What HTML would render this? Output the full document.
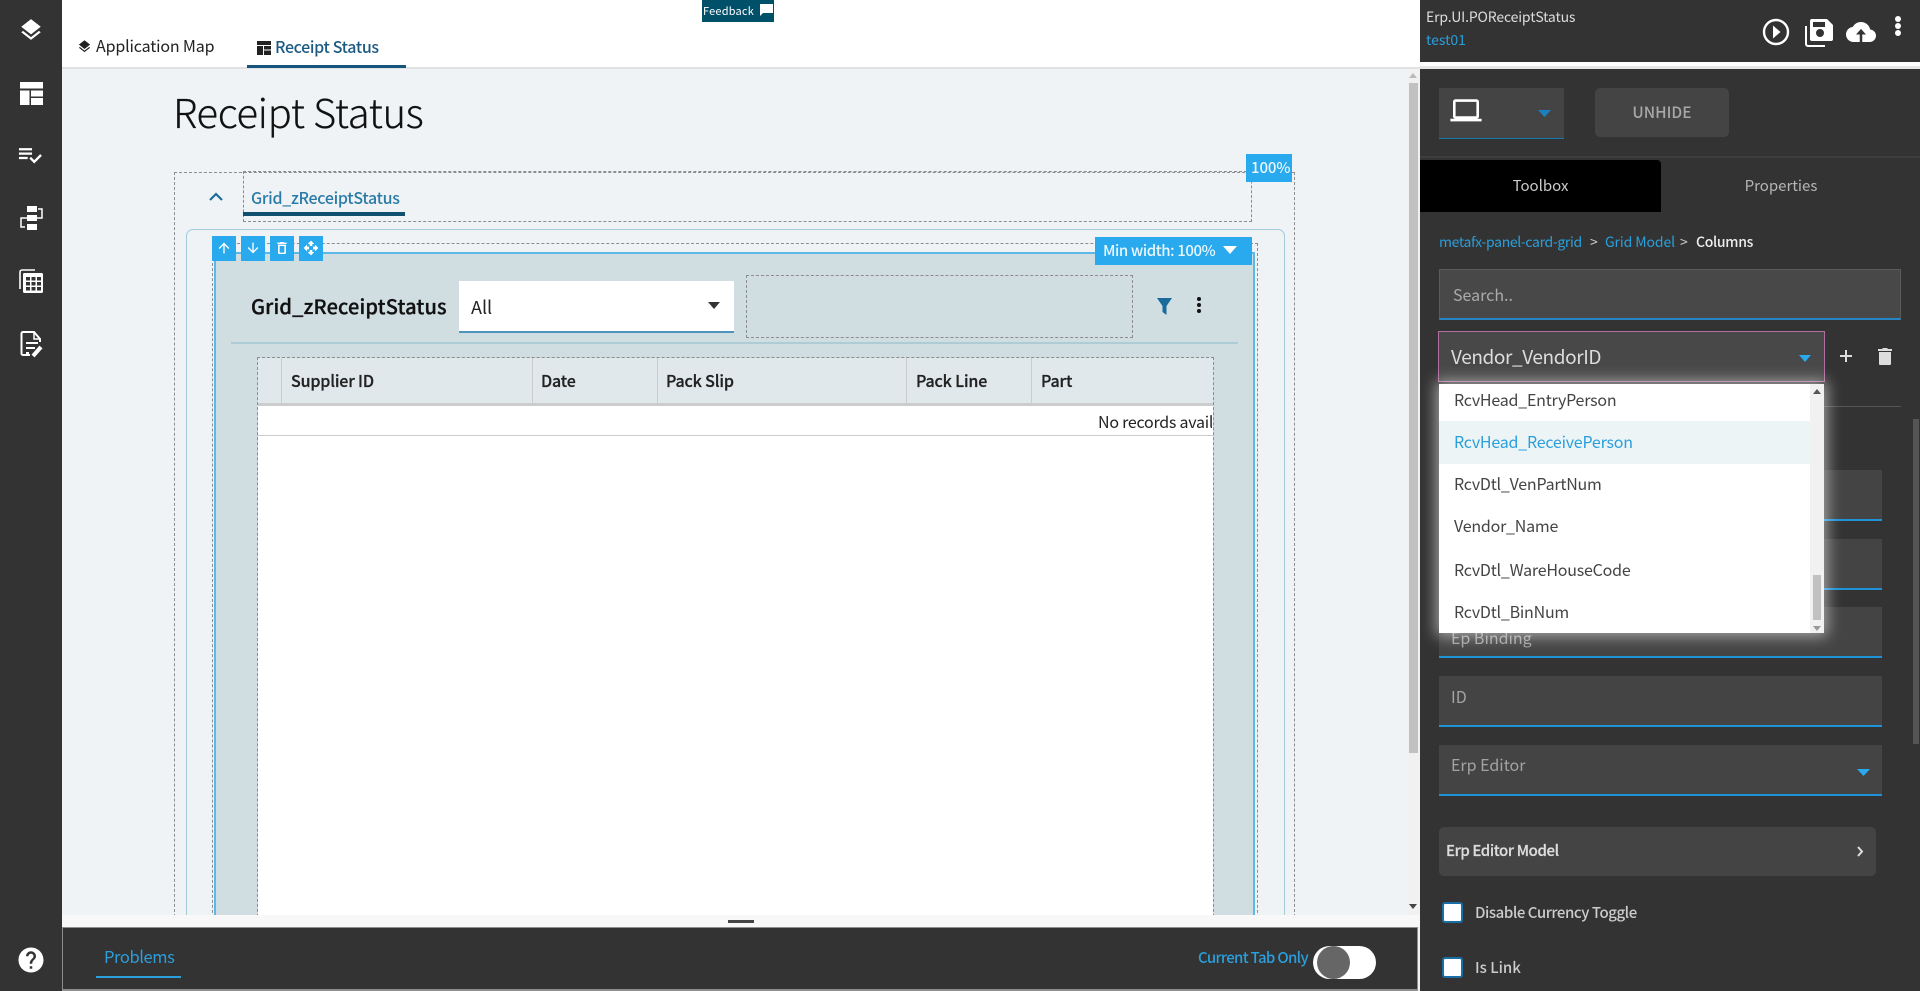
<!DOCTYPE html>
<html><head><meta charset="utf-8"><title>Receipt Status</title>
<style>
html,body{margin:0;padding:0;width:1920px;height:991px;overflow:hidden;background:#eff3f6}
body{position:relative;font-family:"Noto Sans CJK JP","Liberation Sans",sans-serif;color:#222;filter:blur(.3px)}
div,svg,span.a{position:absolute;box-sizing:border-box}
.t{position:absolute;white-space:nowrap;line-height:24px;height:24px}
.d{border:1px dashed #8d8d8d}
.f{left:1439px;width:443px;height:51px;background:#444;border-bottom:2px solid #1f93d8}
.l{left:1451px;color:#a3a3a3;font-size:16px}
.i{left:1454px;font-size:16px;color:#444;letter-spacing:-.22px}
.h{font-size:16px;font-weight:500;color:#222;letter-spacing:-.15px;-webkit-text-stroke:.25px #222}
.b{top:236px;width:24px;height:25px;background:#29aaee}
.b svg{left:4px;top:4px;width:16px;height:16px;fill:#fff}
.cb{left:1442px;width:21px;height:21px;background:#fff;border:2px solid #1a6ea8;border-radius:3px}
</style></head><body>

<!-- top white tabs -->
<div style="left:62px;top:0;width:1358px;height:67px;background:#fff"></div>
<div style="left:62px;top:67px;width:1358px;height:2px;background:#dfe1e2"></div>
<svg style="left:77px;top:39px;width:15px;height:15px" viewBox="0 0 24 24" fill="#222"><path d="M11.99 18.54l-7.37-5.73L3 14.07l9 7 9-7-1.63-1.27-7.38 5.74zM12 16l7.36-5.73L21 9l-9-7-9 7 1.63 1.27L12 16z"/></svg>
<div class="t" style="left:96px;top:33px;font-size:16px;color:#222;letter-spacing:-.15px">Application Map</div>
<svg style="left:257px;top:41px;width:14px;height:14px" viewBox="0 0 14 14" fill="#222"><rect width="14" height="4"/><rect y="5" width="6" height="9"/><rect x="7" y="5" width="7" height="3.5"/><rect x="7" y="9.5" width="7" height="4.5"/></svg>
<div class="t" style="left:275px;top:34px;font-size:16px;font-weight:500;color:#1d5a82;letter-spacing:-.35px">Receipt Status</div>
<div style="left:247px;top:65px;width:159px;height:3px;background:#17557c"></div>

<!-- feedback -->
<div style="left:702px;top:0;width:72px;height:22px;background:#00506a"></div>
<div class="t" style="left:703px;top:-1px;font-size:11px;color:#fff;letter-spacing:.2px">Feedback</div>
<svg style="left:759px;top:3px;width:15px;height:14px" viewBox="0 0 15 14" fill="#fff"><path d="M1 1h13v9H4l-3 3z"/></svg>

<!-- title -->
<div class="t" style="left:173px;top:86px;height:50px;line-height:50px;font-size:40px;font-weight:300;color:#111;letter-spacing:-.35px;-webkit-text-stroke:.2px #111">Receipt Status</div>

<!-- outer dashed -->
<div class="d" style="left:174px;top:172px;width:1121px;height:760px"></div>
<div class="d" style="left:243px;top:171px;width:1009px;height:51px"></div>
<svg style="left:207px;top:189px;width:18px;height:14px" viewBox="0 0 18 14" fill="none" stroke="#1d6d96" stroke-width="2.2"><path d="M3 11l6-6 6 6"/></svg>
<div class="t" style="left:251px;top:185px;font-size:16px;font-weight:500;color:#2a7ba6;letter-spacing:-.3px">Grid_zReceiptStatus</div>
<div style="left:243px;top:212px;width:162px;height:4px;background:#125070"></div>

<!-- card -->
<div style="left:186px;top:229px;width:1099px;height:720px;border:1px solid #a3cbd8;border-radius:7px"></div>
<div class="d" style="left:212px;top:243px;width:1046px;height:700px"></div>
<div style="left:214px;top:252px;width:1041px;height:700px;background:#d0dde1;border:2px solid #5cb8e6"></div>

<!-- toolbar -->
<div class="b" style="left:212px"><svg viewBox="0 0 24 24"><path d="M4 12l1.41 1.41L11 7.83V20h2V7.83l5.58 5.59L20 12l-8-8-8 8z"/></svg></div>
<div class="b" style="left:241px"><svg viewBox="0 0 24 24"><path d="M20 12l-1.41-1.41L13 16.17V4h-2v12.17l-5.58-5.59L4 12l8 8 8-8z"/></svg></div>
<div class="b" style="left:270px"><svg viewBox="0 0 24 24"><path d="M6 19c0 1.1.9 2 2 2h8c1.1 0 2-.9 2-2V7H6v12zm2.5-10h7v10h-7zM19 4h-3.5l-1-1h-5l-1 1H5v2h14V4z"/></svg></div>
<div class="b" style="left:299px"><svg viewBox="0 0 24 24"><path d="M10 9h4V6h3l-5-5-5 5h3v3zm-1 1H6V7l-5 5 5 5v-3h3v-4zm14 2l-5-5v3h-3v4h3v3l5-5zm-9 3h-4v3H7l5 5 5-5h-3v-3z"/></svg></div>

<div style="left:1095px;top:237px;width:157px;height:28px;background:#29aaee"></div>
<div class="t" style="left:1103px;top:239px;font-size:15px;color:#eaf6fd;font-weight:500;letter-spacing:-.42px">Min width: 100%</div>
<svg style="left:1223px;top:246px;width:14px;height:8px" viewBox="0 0 14 8" fill="#fff"><path d="M0 0h14L7 8z"/></svg>
<div style="left:1246px;top:154px;width:46px;height:28px;background:#29aaee"></div>
<div class="t" style="left:1251px;top:156px;font-size:15px;color:#eaf6fd;font-weight:500;letter-spacing:-.1px">100%</div>

<!-- grid header -->
<div class="t" style="left:251px;top:294px;font-size:20px;font-weight:500;color:#111;letter-spacing:.15px;-webkit-text-stroke:.3px #111">Grid_zReceiptStatus</div>
<div style="left:459px;top:281px;width:275px;height:52px;background:#fff;border-bottom:2px solid #4f94bd"></div>
<div class="t" style="left:471px;top:295px;font-size:18px;color:#222">All</div>
<svg style="left:708px;top:302px;width:12px;height:7px" viewBox="0 0 12 7" fill="#333"><path d="M0 0h12L6 7z"/></svg>
<div class="d" style="left:746px;top:275px;width:387px;height:63px"></div>
<svg style="left:1157px;top:298px;width:15px;height:17px" viewBox="0 0 15 17" fill="#1a6b9c"><path d="M0 0h15L9.5 8v9l-4-3V8z"/></svg>
<svg style="left:1196px;top:296px;width:6px;height:18px" viewBox="0 0 6 18" fill="#111"><circle cx="3" cy="3" r="2"/><circle cx="3" cy="9" r="2"/><circle cx="3" cy="15" r="2"/></svg>
<div style="left:231px;top:342px;width:1007px;height:2px;background:#aeccd6"></div>

<!-- grid table -->
<div style="left:258px;top:358px;width:955px;height:574px;background:#fff"></div>
<div style="left:258px;top:358px;width:955px;height:45px;background:#e1e8eb"></div>
<div style="left:258px;top:403px;width:955px;height:3px;background:#ccc"></div>
<div style="left:258px;top:435px;width:955px;height:1px;background:#ccc"></div>
<div style="left:281px;top:358px;width:1px;height:45px;background:#ccc"></div>
<div style="left:532px;top:358px;width:1px;height:45px;background:#ccc"></div>
<div style="left:657px;top:358px;width:1px;height:45px;background:#ccc"></div>
<div style="left:906px;top:358px;width:1px;height:45px;background:#ccc"></div>
<div style="left:1031px;top:358px;width:1px;height:45px;background:#ccc"></div>
<div class="t h" style="left:291px;top:368px">Supplier ID</div>
<div class="t h" style="left:541px;top:368px">Date</div>
<div class="t h" style="left:666px;top:368px">Pack Slip</div>
<div class="t h" style="left:916px;top:368px">Pack Line</div>
<div class="t h" style="left:1041px;top:368px">Part</div>
<div style="left:1090px;top:408px;width:122px;height:26px;overflow:hidden"><div class="t" style="left:8px;top:1px;font-size:16px;color:#222;letter-spacing:-.25px">No records available</div></div>
<div class="d" style="left:257px;top:357px;width:957px;height:580px;background:none"></div>

<!-- main scrollbar -->
<div style="left:1408px;top:69px;width:12px;height:846px;background:#f1f1f1"></div>
<div style="left:1409px;top:83px;width:9px;height:670px;background:#c1c1c1"></div>
<svg style="left:1409px;top:73px;width:8px;height:5px" viewBox="0 0 8 5" fill="#bbb"><path d="M0 5h8L4 0z"/></svg>
<svg style="left:1409px;top:904px;width:8px;height:5px" viewBox="0 0 8 5" fill="#444"><path d="M0 0h8L4 5z"/></svg>

<!-- bottom panel -->
<div style="left:62px;top:915px;width:1358px;height:12px;background:#f8f8f8"></div>
<div style="left:728px;top:920px;width:26px;height:3px;background:#444"></div>
<div style="left:62px;top:927px;width:1356px;height:64px;background:#333;border:1px solid #8e8e8e;border-bottom:2px solid #8e8e8e"></div>
<div class="t" style="left:104px;top:944px;font-size:16.5px;color:#2a9fdc;letter-spacing:-.4px">Problems</div>
<div style="left:96px;top:976px;width:85px;height:2px;background:#2a9fdc"></div>
<div class="t" style="left:1198px;top:946px;font-size:15px;font-weight:500;color:#2a9fdc;letter-spacing:-.68px">Current Tab Only</div>
<div style="left:1313px;top:946px;width:63px;height:33px;background:#fff;border-radius:17px"></div>
<div style="left:1317px;top:946px;width:33px;height:33px;background:#666;border-radius:50%"></div>

<!-- left sidebar -->
<div style="left:0;top:0;width:62px;height:991px;background:#333"></div>
<svg style="left:18px;top:16px;width:26px;height:28px" viewBox="0 0 24 24" fill="#fff"><path d="M11.99 18.54l-7.37-5.73L3 14.07l9 7 9-7-1.63-1.27-7.38 5.74zM12 16l7.36-5.73L21 9l-9-7-9 7 1.63 1.27L12 16z"/></svg>
<svg style="left:20px;top:82px;width:23px;height:23px" viewBox="0 0 23 23" fill="#fff"><rect width="23" height="6.5"/><rect y="8.5" width="9.5" height="14.5"/><rect x="11" y="8.5" width="12" height="6"/><rect x="11" y="16" width="12" height="7"/></svg>
<svg style="left:17px;top:146px;width:29px;height:24px" viewBox="0 0 25 22" fill="#fff"><path d="M14 10H2v2h12v-2zm0-4H2v2h12V6zM2 16h8v-2H2v2zm19.5-4.5L23 13l-6.99 7-4.51-4.5L13 14l3.01 3 5.49-5.5z" transform="translate(-1 -4)"/></svg>
<svg style="left:20px;top:205px;width:24px;height:26px" viewBox="0 0 24 26" fill="#fff"><rect x="7" y="1" width="10" height="6"/><rect x="7" y="10" width="10" height="6"/><rect x="7" y="19" width="10" height="6"/><path d="M17 13h5V4h-4M7 13H1v9h4" fill="none" stroke="#fff" stroke-width="1.5"/></svg>
<svg style="left:18px;top:268px;width:26px;height:26px" viewBox="0 0 26 26"><path d="M17 2H4a2 2 0 0 0-2 2v17" fill="none" stroke="#fff" stroke-width="1.6"/><rect x="5" y="5" width="20" height="20" rx="1.5" fill="#fff"/><g fill="#333"><rect x="8" y="9" width="4" height="3.5"/><rect x="13.5" y="9" width="4" height="3.5"/><rect x="19" y="9" width="4" height="3.5"/><rect x="8" y="14" width="4" height="3.5"/><rect x="13.5" y="14" width="4" height="3.5"/><rect x="19" y="14" width="4" height="3.5"/><rect x="8" y="19" width="4" height="3.5"/><rect x="13.5" y="19" width="4" height="3.5"/><rect x="19" y="19" width="4" height="3.5"/></g></svg>
<svg style="left:20px;top:330px;width:25px;height:28px" viewBox="0 0 25 28" fill="none" stroke="#fff" stroke-width="2"><path d="M10 25H3a1.5 1.5 0 0 1-1.5-1.5v-20A1.5 1.5 0 0 1 3 2h11l6 7v3"/><path d="M14 2v7h6" stroke-width="1.5"/><path d="M6 13h12M6 18h9M6 23h3"/><path d="M13 26l8-9" stroke-width="4"/></svg>
<svg style="left:16px;top:945px;width:30px;height:30px" viewBox="0 0 24 24" fill="#fff"><path d="M12 2C6.48 2 2 6.48 2 12s4.48 10 10 10 10-4.48 10-10S17.52 2 12 2zm1 17h-2v-2h2v2zm2.07-7.75l-.9.92C13.45 12.9 13 13.5 13 15h-2v-.5c0-1.1.45-2.1 1.17-2.83l1.24-1.26c.37-.36.59-.86.59-1.41 0-1.1-.9-2-2-2s-2 .9-2 2H8c0-2.21 1.79-4 4-4s4 1.79 4 4c0 .88-.36 1.68-.93 2.25z"/></svg>

<!-- right panel -->
<div style="left:1420px;top:0;width:500px;height:991px;background:#333"></div>
<div style="left:1420px;top:62px;width:500px;height:7px;background:linear-gradient(#fff 0,#fff 4px,#e4e6e8 4px)"></div>
<div class="t" style="left:1426px;top:5px;font-size:14px;color:#ddd;letter-spacing:-.15px">Erp.UI.POReceiptStatus</div>
<div class="t" style="left:1426px;top:28px;font-size:14px;color:#2a9fdc">test01</div>
<svg style="left:1762px;top:18px;width:28px;height:28px" viewBox="0 0 28 28"><circle cx="14" cy="14" r="12" fill="none" stroke="#fff" stroke-width="2.4"/><path d="M11 7.5l7.5 6.5-7.5 6.500z" fill="#fff"/></svg>
<svg style="left:1803px;top:17px;width:31px;height:31px" viewBox="0 0 31 31"><path d="M3 9v18a2 2 0 0 0 2 2h17" fill="none" stroke="#fff" stroke-width="2"/><path d="M9 2h15l6 6v14a2 2 0 0 1-2 2H9a2 2 0 0 1-2-2V4a2 2 0 0 1 2-2z" fill="#fff"/><rect x="10" y="5" width="12" height="5" fill="#333"/><circle cx="17" cy="16" r="4" fill="#333"/></svg>
<svg style="left:1846px;top:17px;width:30px;height:30px" viewBox="0 0 24 24" fill="#fff"><path d="M19.35 10.04C18.67 6.59 15.64 4 12 4 9.11 4 6.6 5.64 5.35 8.04 2.34 8.36 0 10.91 0 14c0 3.31 2.69 6 6 6h5v-6H8l4-4.5 4 4.500h-3v6h6c2.76 0 5-2.24 5-5 0-2.64-2.05-4.78-4.65-4.96z"/></svg>
<svg style="left:1894px;top:15px;width:8px;height:22px" viewBox="0 0 8 22" fill="#fff"><circle cx="4" cy="4" r="3"/><circle cx="4" cy="11" r="3"/><circle cx="4" cy="18" r="3"/></svg>

<div style="left:1439px;top:88px;width:125px;height:51px;background:#444;border-bottom:1px solid #1678ae"></div>
<svg style="left:1450px;top:98px;width:32px;height:26px" viewBox="0 0 24 20" fill="#fff"><path d="M20 16c1.1 0 2-.9 2-2V3c0-1.1-.9-2-2-2H4C2.9 1 2 1.900 2 3v11c0 1.100.9 2 2 2H0v2h24v-2h-4zM4 3h16v11H4z"/></svg>
<svg style="left:1538px;top:110px;width:13px;height:7px" viewBox="0 0 13 7" fill="#1c7fc0"><path d="M0 0h13L6.500 7z"/></svg>
<div style="left:1595px;top:88px;width:134px;height:49px;background:#444;border-radius:5px"></div>
<div class="t" style="left:1595px;top:100px;width:134px;text-align:center;font-size:15.5px;font-weight:500;color:#a8a8a8">UNHIDE</div>
<div style="left:1420px;top:156px;width:500px;height:2px;background:#3e3e3e"></div>
<div style="left:1420px;top:160px;width:241px;height:52px;background:#000;border-radius:0 4px 0 0"></div>
<div class="t" style="left:1420px;top:174px;width:241px;text-align:center;font-size:15px;color:#ccc">Toolbox</div>
<div class="t" style="left:1661px;top:174px;width:240px;text-align:center;font-size:15px;color:#b5b5b5">Properties</div>

<div class="t" style="left:1439px;top:230px;font-size:14px;color:#2a9fdc;letter-spacing:-.35px">metafx-panel-card-grid</div>
<div class="t" style="left:1590px;top:230px;font-size:14px;color:#ccc">&gt;</div>
<div class="t" style="left:1605px;top:230px;font-size:14px;color:#2a9fdc;letter-spacing:-.1px">Grid Model</div>
<div class="t" style="left:1680px;top:230px;font-size:14px;color:#ccc">&gt;</div>
<div class="t" style="left:1696px;top:230px;font-size:14px;font-weight:500;color:#eee;letter-spacing:-.3px">Columns</div>

<div style="left:1439px;top:269px;width:462px;height:51px;background:#484848;border:1px solid #5a5a5a;border-bottom:2px solid #2486c4"></div>
<div class="t" style="left:1453px;top:282px;font-size:16px;color:#aaa">Search..</div>
<div style="left:1438px;top:331px;width:387px;height:51px;background:#484848;border:1px solid #b06f9e"></div>
<div class="t" style="left:1451px;top:345px;font-size:19px;color:#ddd;letter-spacing:-.4px">Vendor_VendorID</div>
<svg style="left:1799px;top:355px;width:12px;height:7px" viewBox="0 0 12 7" fill="#29a9ee"><path d="M0 0h12L6 7z"/></svg>
<svg style="left:1839px;top:349px;width:14px;height:14px" viewBox="0 0 14 14" fill="#ddd"><rect x="6" y="1" width="2" height="12"/><rect x="1" y="6" width="12" height="2"/></svg>
<svg style="left:1877px;top:347px;width:16px;height:18px" viewBox="0 0 16 18" fill="#ddd"><path d="M2 5h12v12a1 1 0 0 1-1 1H3a1 1 0 0 1-1-1zM1 2h4l1-1h4l1 1h4v2H1z"/></svg>
<div style="left:1439px;top:406px;width:462px;height:1px;background:#555"></div>

<!-- fields -->
<div class="f" style="top:470px"></div>
<div class="f" style="top:539px"></div>
<div class="f" style="top:607px"></div>
<div class="t l" style="top:625px">Ep Binding</div>
<div class="f" style="top:676px"></div>
<div class="t l" style="top:684px">ID</div>
<div class="f" style="top:745px"></div>
<div class="t l" style="top:752px">Erp Editor</div>
<svg style="left:1857px;top:769px;width:13px;height:7px" viewBox="0 0 13 7" fill="#29a9ee"><path d="M0 0h13L6.500 7z"/></svg>
<div style="left:1439px;top:827px;width:437px;height:49px;background:#444;border-radius:5px"></div>
<div class="t" style="left:1446px;top:839px;font-size:15px;font-weight:500;color:#ddd;letter-spacing:-.4px;-webkit-text-stroke:.2px #ddd">Erp Editor Model</div>
<svg style="left:1856px;top:846px;width:8px;height:11px" viewBox="0 0 8 11" fill="none" stroke="#ddd" stroke-width="2"><path d="M2 1l4 4.500-4 4.500"/></svg>
<div class="cb" style="top:902px"></div>
<div class="t" style="left:1475px;top:901px;font-size:15px;font-weight:500;color:#ccc;letter-spacing:-.45px">Disable Currency Toggle</div>
<div class="cb" style="top:957px"></div>
<div class="t" style="left:1475px;top:956px;font-size:15px;font-weight:500;color:#ccc">Is Link</div>
<div style="left:1913px;top:419px;width:6px;height:325px;background:#555"></div>

<!-- dropdown -->
<div style="left:1439px;top:384px;width:385px;height:249px;background:#fff;box-shadow:0 0 14px 3px rgba(255,255,255,.55);overflow:hidden">
<div style="left:0;top:37px;width:371px;height:43px;background:#ecf4f6"></div>
<div style="left:371px;top:0;width:14px;height:249px;background:#f1f1f1"></div>
<div style="left:374px;top:191px;width:8px;height:45px;background:#c1c1c1"></div>
<svg style="left:374px;top:5px;width:8px;height:5px" viewBox="0 0 8 5" fill="#555"><path d="M0 5h8L4 0z"/></svg>
<svg style="left:374px;top:242px;width:8px;height:5px" viewBox="0 0 8 5" fill="#999"><path d="M0 0h8L4 5z"/></svg>
</div>
<div class="t i" style="top:387px">RcvHead_EntryPerson</div>
<div class="t i" style="top:429px;color:#2a9fdc">RcvHead_ReceivePerson</div>
<div class="t i" style="top:471px">RcvDtl_VenPartNum</div>
<div class="t i" style="top:513px">Vendor_Name</div>
<div class="t i" style="top:557px">RcvDtl_WareHouseCode</div>
<div class="t i" style="top:599px">RcvDtl_BinNum</div>

</body></html>
